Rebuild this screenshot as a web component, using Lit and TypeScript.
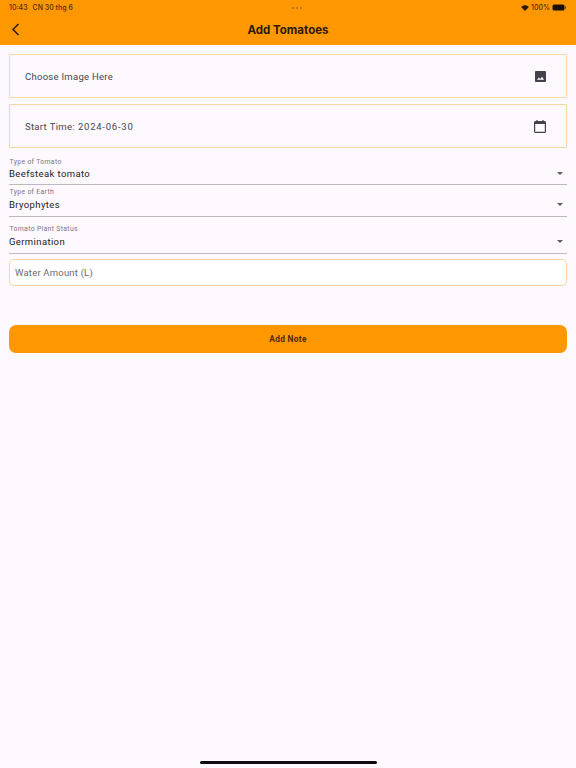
import { LitElement, html, css } from 'lit';
import { customElement } from 'lit/decorators.js';

const caret = html`<svg class="caret" width="6" height="3" viewBox="0 0 8 4"><path d="M0 0h8L4 4z" fill="#5f5a66"></path></svg>`;

@customElement('app-root')
export class AppRoot extends LitElement {
    static override styles = css`
        :host {
            display: flex;
            flex-direction: column;
            width: 576px;
            height: 768px;
            background: #fef8ff;
            font-family: Roboto, 'Liberation Sans', sans-serif;
            color: #1d1b20;
            overflow: hidden;
        }
        .header {
            height: 45px;
            flex: none;
            background: #ff9800;
            box-sizing: border-box;
            display: flex;
            flex-direction: column;
        }
        .status {
            height: 14px;
            padding: 1px 10px 0 9px;
            box-sizing: border-box;
            display: flex;
            align-items: center;
            justify-content: space-between;
            font-family: Inter, 'Liberation Sans', sans-serif;
            font-size: 7px;
            font-weight: 500;
            color: #4a3008;
        }
        .status-left {
            display: flex;
            gap: 5px;
        }
        .status-mid {
            display: flex;
            gap: 2px;
        }
        .status-mid span {
            width: 2px;
            height: 2px;
            border-radius: 50%;
            background: #a8690c;
        }
        .status-right {
            display: flex;
            align-items: center;
            gap: 2px;
        }
        .nav {
            flex: 1;
            display: grid;
            grid-template-columns: 32px 1fr 32px;
            align-items: center;
        }
        .back {
            display: flex;
            padding-left: 11px;
        }
        .title {
            text-align: center;
            font-family: Inter, 'Liberation Sans', sans-serif;
            font-size: 11.5px;
            font-weight: 700;
            color: #2b1a05;
        }
        .form {
            padding: 9px 9px 0;
            display: flex;
            flex-direction: column;
        }
        .picker {
            height: 44px;
            box-sizing: border-box;
            border: 1px solid #f5d7a0;
            display: flex;
            align-items: center;
            justify-content: space-between;
            padding: 0 20px 0 15px;
            font-size: 9.5px;
            letter-spacing: 0.28px;
            color: #49454f;
            border-radius: 1px;
        }
        .picker + .picker {
            margin-top: 6px;
        }
        .picker svg {
            display: block;
        }
        .time {
            word-spacing: 0.5px;
        }
        .num {
            letter-spacing: 0.75px;
        }
        .select {
            border-bottom: 1px solid #bdb8c2;
            display: flex;
            flex-direction: column;
            padding-bottom: 5px;
        }
        .select .label {
            font-size: 6.8px;
            letter-spacing: 0.35px;
            color: #7a7580;
            line-height: 9px;
            padding-left: 0.5px;
        }
        .select .value {
            font-size: 9.5px;
            letter-spacing: 0.38px;
            color: #1d1b20;
            line-height: 12px;
            margin-top: 2px;
        }
        .row {
            display: flex;
            align-items: center;
            justify-content: space-between;
            padding-right: 4px;
        }
        .s1 {
            margin-top: 10px;
            padding-bottom: 4px;
        }
        .s1 .value {
            margin-top: 1px;
        }
        .s2 {
            margin-top: 3px;
        }
        .s3 {
            margin-top: 8px;
        }
        .input {
            margin-top: 5px;
            height: 27px;
            box-sizing: border-box;
            border: 1px solid #f6d49a;
            border-radius: 5px;
            background: #fff;
            display: flex;
            align-items: center;
            padding-left: 5px;
            font-size: 9.5px;
            letter-spacing: 0.2px;
            color: #6d6873;
        }
        .submit {
            margin-top: 39px;
            height: 28px;
            border-radius: 7px;
            background: #ff9800;
            display: flex;
            align-items: center;
            justify-content: center;
            font-size: 8.4px;
            font-weight: 700;
            letter-spacing: 0.3px;
            color: #4a2c05;
        }
        .spacer {
            flex: 1;
        }
        .home {
            flex: none;
            align-self: center;
            width: 177px;
            height: 3px;
            margin-bottom: 4px;
            border-radius: 2px;
            background: #0d0a0e;
        }
    `;

    override render() {
        return html`
            <div class="header">
                <div class="status">
                    <div class="status-left"><span>10:43</span><span>CN 30 thg 6</span></div>
                    <div class="status-mid"><span></span><span></span><span></span></div>
                    <div class="status-right">
                        <svg width="8" height="6" viewBox="0 0 18 14"><path d="M9 14L0 4.500C5-1 13-1 18 4.500z" fill="#2b1a05"></path></svg>
                        <span>100%</span>
                        <svg width="14" height="7" viewBox="0 0 14 7"><rect x="0.500" y="0.500" width="12" height="6" rx="1.500" fill="#1c1204"></rect><rect x="13" y="2.500" width="1" height="2" fill="#5a3a08"></rect></svg>
                    </div>
                </div>
                <div class="nav">
                    <div class="back">
                        <svg width="9" height="13" viewBox="0 0 9 13"><path d="M7.500 1L2 6.500 7.500 12" fill="none" stroke="#2b1a05" stroke-width="1.500"></path></svg>
                    </div>
                    <div class="title">Add Tomatoes</div>
                    <div></div>
                </div>
            </div>
            <div class="form">
                <div class="picker">
                    <span>Choose Image Here</span>
                    <svg width="11" height="11" viewBox="0 0 12 12">
                        <path d="M1.200 0h9.600c.7 0 1.200.5 1.200 1.200v9.600c0 .7-.5 1.200-1.200 1.200H1.200C.5 12 0 11.500 0 10.800V1.200C0 .5.5 0 1.200 0zM2 9.500h8L7.600 6.300 5.700 8.700 4.300 7z" fill="#45414c" fill-rule="evenodd"></path>
                    </svg>
                </div>
                <div class="picker">
                    <span class="time">Start Time: <span class="num">2024-06-30</span></span>
                    <svg width="12" height="13" viewBox="0 0 12 13">
                        <path d="M3 0v1.500M9 0v1.500" stroke="#45414c" stroke-width="1.200"></path>
                        <rect x="0.600" y="1.600" width="10.800" height="10.800" rx="1" fill="none" stroke="#45414c" stroke-width="1.200"></rect>
                        <rect x="0.600" y="1.600" width="10.800" height="2.400" fill="#45414c"></rect>
                    </svg>
                </div>
                <div class="select s1">
                    <span class="label">Type of Tomato</span>
                    <div class="row"><span class="value">Beefsteak tomato</span>${caret}</div>
                </div>
                <div class="select s2">
                    <span class="label">Type of Earth</span>
                    <div class="row"><span class="value">Bryophytes</span>${caret}</div>
                </div>
                <div class="select s3">
                    <span class="label">Tomato Plant Status</span>
                    <div class="row"><span class="value">Germination</span>${caret}</div>
                </div>
                <div class="input">Water Amount (L)</div>
                <div class="submit">Add Note</div>
            </div>
            <div class="spacer"></div>
            <div class="home"></div>
        `;
    }
}
